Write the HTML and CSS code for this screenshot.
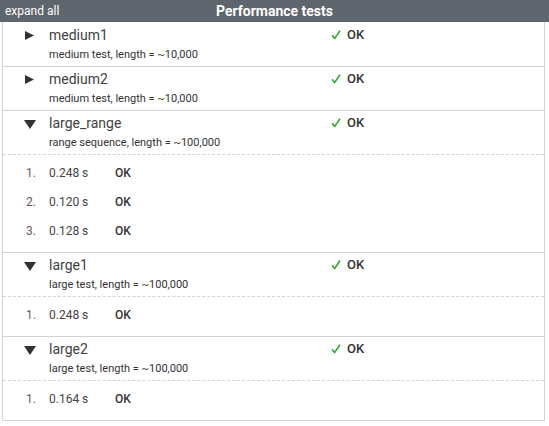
FILE: index.html
```html
<!DOCTYPE html>
<html>
<head>
<meta charset="utf-8">
<link rel="stylesheet" href="styles.css">
</head>
<body>
<div class="header">
  <span class="expand">expand all</span>
  <span class="title">Performance tests</span>
  <span></span>
</div>
<div class="box">
  <div class="test">
    <div class="head">
      <span class="toggle"><svg viewBox="0 0 12 12" width="12" height="12"><polygon points="1,1 10,5.5 1,10" /></svg></span>
      <span class="name">medium1</span>
      <span class="status"><svg class="check" viewBox="0 0 10 10" width="10" height="10"><path d="M1.5 5.8 L3.6 8.6 L8.6 1.2" /></svg>OK</span>
      <span class="desc">medium test, length = ~10,000</span>
    </div>
  </div>
  <div class="test">
    <div class="head">
      <span class="toggle"><svg viewBox="0 0 12 12" width="12" height="12"><polygon points="1,1 10,5.5 1,10" /></svg></span>
      <span class="name">medium2</span>
      <span class="status"><svg class="check" viewBox="0 0 10 10" width="10" height="10"><path d="M1.5 5.8 L3.6 8.6 L8.6 1.2" /></svg>OK</span>
      <span class="desc">medium test, length = ~10,000</span>
    </div>
  </div>
  <div class="test open">
    <div class="head">
      <span class="toggle"><svg viewBox="0 0 12 12" width="12" height="12"><polygon points="0,2 12,2 6,11" /></svg></span>
      <span class="name">large_range</span>
      <span class="status"><svg class="check" viewBox="0 0 10 10" width="10" height="10"><path d="M1.5 5.8 L3.6 8.6 L8.6 1.2" /></svg>OK</span>
      <span class="desc">range sequence, length = ~100,000</span>
    </div>
    <div class="runs">
      <div class="run"><span class="num">1.</span><span class="time">0.248 s</span><span class="res">OK</span></div>
      <div class="run"><span class="num">2.</span><span class="time">0.120 s</span><span class="res">OK</span></div>
      <div class="run"><span class="num">3.</span><span class="time">0.128 s</span><span class="res">OK</span></div>
    </div>
  </div>
  <div class="test open">
    <div class="head">
      <span class="toggle"><svg viewBox="0 0 12 12" width="12" height="12"><polygon points="0,2 12,2 6,11" /></svg></span>
      <span class="name">large1</span>
      <span class="status"><svg class="check" viewBox="0 0 10 10" width="10" height="10"><path d="M1.5 5.8 L3.6 8.6 L8.6 1.2" /></svg>OK</span>
      <span class="desc">large test, length = ~100,000</span>
    </div>
    <div class="runs">
      <div class="run"><span class="num">1.</span><span class="time">0.248 s</span><span class="res">OK</span></div>
    </div>
  </div>
  <div class="test open">
    <div class="head">
      <span class="toggle"><svg viewBox="0 0 12 12" width="12" height="12"><polygon points="0,2 12,2 6,11" /></svg></span>
      <span class="name">large2</span>
      <span class="status"><svg class="check" viewBox="0 0 10 10" width="10" height="10"><path d="M1.5 5.8 L3.6 8.6 L8.6 1.2" /></svg>OK</span>
      <span class="desc">large test, length = ~100,000</span>
    </div>
    <div class="runs">
      <div class="run"><span class="num">1.</span><span class="time">0.164 s</span><span class="res">OK</span></div>
    </div>
  </div>
</div>
</body>
</html>
```

FILE: styles.css
```css
html, body {
  margin: 0;
  padding: 0;
  background: #ffffff;
  font-family: Roboto, "Liberation Sans", sans-serif;
  color: #333333;
}

.header {
  height: 22px;
  background: #5e656c;
  color: #ffffff;
  display: grid;
  grid-template-columns: 1fr auto 1fr;
  align-items: center;
}

.expand {
  font-size: 12px;
  padding-left: 5px;
  line-height: 22px;
}

.title {
  font-size: 14px;
  font-weight: 700;
  line-height: 22px;
}

.box {
  margin-left: 2px;
  width: 543px;
  box-sizing: border-box;
  border: 1px solid #d3d3d3;
  border-top: none;
  padding-top: 1px;
}

.test {
  border-bottom: 1px solid #d3d3d3;
}

.test:last-child {
  border-bottom: none;
}

.head {
  display: grid;
  grid-template-columns: 46px 282px 1fr;
  grid-template-rows: 20px 16px;
  row-gap: 2px;
  padding: 2px 0 3px 0;
}

.open .head {
  border-bottom: 1px dashed #d3d3d3;
}

.toggle {
  grid-column: 1;
  grid-row: 1;
  padding-left: 21px;
  height: 20px;
}

.toggle svg {
  display: block;
  margin-top: 5px;
  fill: #333333;
}

.name {
  grid-column: 2;
  grid-row: 1;
  font-size: 14px;
  line-height: 20px;
  color: #3f3f3f;
}

.status {
  grid-column: 3;
  grid-row: 1;
  font-size: 13px;
  font-weight: 500;
  line-height: 20px;
  color: #333333;
  display: flex;
  align-items: center;
}

.check {
  margin-right: 6px;
  fill: none;
  stroke: #2fa82f;
  stroke-width: 1.6;
  stroke-linecap: round;
  stroke-linejoin: round;
}

.desc {
  grid-column: 2;
  grid-row: 2;
  font-size: 11px;
  line-height: 16px;
  color: #333333;
}

.runs {
  padding: 4px 0 6px 0;
}

.run {
  display: grid;
  grid-template-columns: 33px 66px 1fr;
  column-gap: 13px;
  height: 29px;
  align-items: center;
  font-size: 12px;
  line-height: 29px;
}

.num {
  text-align: right;
  color: #6a5a50;
}

.time {
  color: #444444;
}

.res {
  font-weight: 500;
  color: #333333;
  margin-left: -13px;
}
```
